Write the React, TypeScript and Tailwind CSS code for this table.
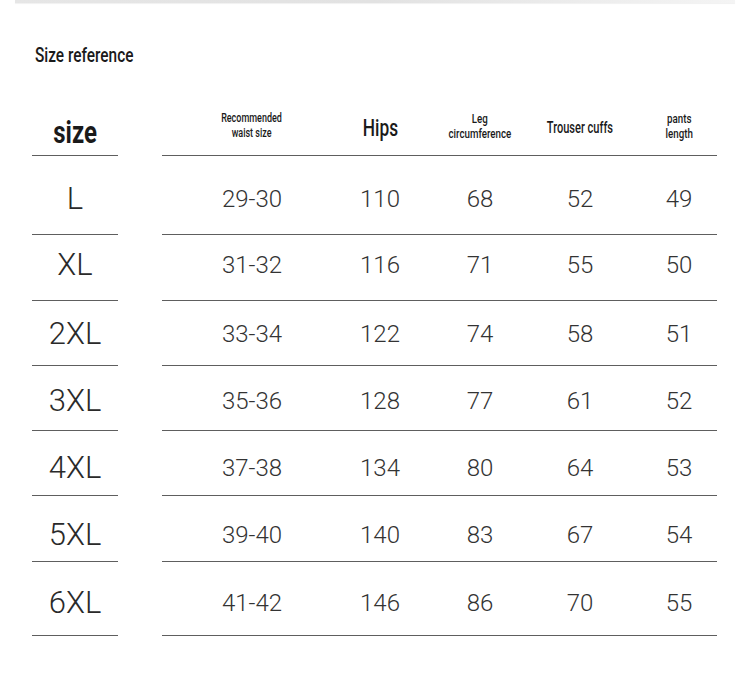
import React from "react";

const rows = [
  { size: "L", v: ["29-30", "110", "68", "52", "49"], h: "h-[79px]", pt: "pt-[28px]" },
  { size: "XL", v: ["31-32", "116", "71", "55", "50"], h: "h-[66px]", pt: "pt-[15px]" },
  { size: "2XL", v: ["33-34", "122", "74", "58", "51"], h: "h-[65px]", pt: "pt-[18px]" },
  { size: "3XL", v: ["35-36", "128", "77", "61", "52"], h: "h-[65px]", pt: "pt-[20px]" },
  { size: "4XL", v: ["37-38", "134", "80", "64", "53"], h: "h-[65px]", pt: "pt-[22px]" },
  { size: "5XL", v: ["39-40", "140", "83", "67", "54"], h: "h-[66px]", pt: "pt-[24px]" },
  { size: "6XL", v: ["41-42", "146", "86", "70", "55"], h: "h-[74px]", pt: "pt-[26px]" },
];

const cond = "inline-block whitespace-nowrap";

export default function App() {
  return (
    <div className="w-[750px] h-[683px] bg-white overflow-hidden font-['Roboto',sans-serif] text-[#1a1a1a]">
      <div className="mx-[15px] h-[3px] bg-gradient-to-r from-[#e6e6e6] via-[#e2e2e2] to-[#f4f4f4] shadow-[0_1px_1px_rgba(0,0,0,0.06)]" />
      <div className="pl-[35px] pt-[40px] h-[97px]">
        <span className={`${cond} scale-x-[0.77] origin-left text-[20px] leading-[24px] font-medium`}>Size reference</span>
      </div>

      <div className="ml-[32px] flex flex-col">
        {/* header */}
        <div className="flex h-[56px]">
          <div className="w-[86px] border-b border-[#5e5e5e] flex justify-center pt-[14px]">
            <span className={`${cond} scale-x-[0.75] text-[32px] leading-[36px] font-bold`}>size</span>
          </div>
          <div className="w-[44px]" />
          <div className="w-[555px] border-b border-[#5e5e5e] grid grid-cols-[180px_76px_124px_76px_1fr] items-center">
            <div className="flex flex-col items-center leading-[15px] text-[12px] font-medium -mt-[3px]">
              <span className={`${cond} scale-x-[0.75]`}>Recommended</span>
              <span className={`${cond} scale-x-[0.75]`}>waist size</span>
            </div>
            <div className="flex justify-center">
              <span className={`${cond} scale-x-[0.72] text-[24px] leading-[28px] font-medium`}>Hips</span>
            </div>
            <div className="flex flex-col items-center leading-[15px] text-[13px] font-medium -mt-[3px]">
              <span className={`${cond} scale-x-[0.75]`}>Leg</span>
              <span className={`${cond} scale-x-[0.75]`}>circumference</span>
            </div>
            <div className="flex justify-center">
              <span className={`${cond} scale-x-[0.69] text-[16px] leading-[20px] font-medium`}>Trouser cuffs</span>
            </div>
            <div className="flex flex-col items-center leading-[15px] text-[13px] font-medium pl-[23px] -mt-[3px]">
              <span className={`${cond} scale-x-[0.75]`}>pants</span>
              <span className={`${cond} scale-x-[0.75]`}>length</span>
            </div>
          </div>
        </div>

        {rows.map((r) => (
          <div key={r.size} className={`flex ${r.h}`}>
            <div className={`w-[86px] border-b border-[#5e5e5e] flex justify-center ${r.pt}`}>
              <span className="text-[31px] leading-[30px] font-light text-[#2a2a2a]">{r.size}</span>
            </div>
            <div className="w-[44px]" />
            <div className={`w-[555px] border-b border-[#5e5e5e] grid grid-cols-[180px_76px_124px_76px_1fr] ${r.pt} text-[24px] leading-[30px] font-light text-[#333]`}>
              <div className="text-center">{r.v[0]}</div>
              <div className="text-center">{r.v[1]}</div>
              <div className="text-center">{r.v[2]}</div>
              <div className="text-center">{r.v[3]}</div>
              <div className="text-center pl-[23px]">{r.v[4]}</div>
            </div>
          </div>
        ))}
      </div>
    </div>
  );
}
